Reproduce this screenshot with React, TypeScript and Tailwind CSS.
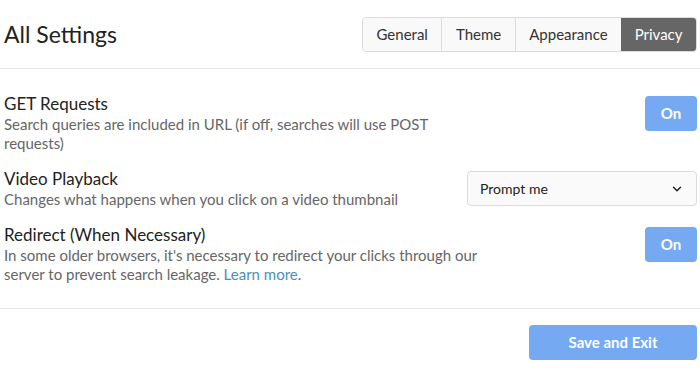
import { ChevronDown } from "lucide-react";

function Toggle() {
  return (
    <button className="mt-[3px] w-[52px] h-[35px] rounded-[4px] bg-[#75a9f1] text-white text-[15px] font-bold shrink-0">
      On
    </button>
  );
}

export default function App() {
  const tabs = ["General", "Theme", "Appearance", "Privacy"];
  return (
    <div className="w-[700px] h-[381px] bg-white text-[#222] font-['Lato','Liberation_Sans',sans-serif]">
      <div className="flex items-center justify-between pl-1 pr-[3px] pt-[17px] pb-4 border-b border-[#e6e6e6]">
        <h1 className="text-[23px] leading-none">All Settings</h1>
        <div className="flex h-[35px] rounded-[4px] border border-[#dcdcdc] overflow-hidden text-[15px]">
          {tabs.map((t, i) => (
            <div
              key={t}
              className={
                t === "Privacy"
                  ? "flex items-center px-[13.5px] bg-[#666] text-white"
                  : "flex items-center px-[13.5px] bg-[#f9f9f9] text-[#333] " + (i > 0 ? "border-l border-[#dcdcdc]" : "")
              }
            >
              {t}
            </div>
          ))}
        </div>
      </div>

      <div className="flex flex-col gap-[15px] pl-1 pr-[3px] pt-[24px] pb-[24px] border-b border-[#e6e6e6]">
        <div className="flex items-start justify-between">
          <div className="w-[470px]">
            <div className="text-[17px] leading-[22px]">GET Requests</div>
            <div className="text-[15px] leading-[19px] text-[#666]">
              Search queries are included in URL (if off, searches will use POST requests)
            </div>
          </div>
          <Toggle />
        </div>
        <div className="flex items-center justify-between">
          <div>
            <div className="text-[17px] leading-[22px]">Video Playback</div>
            <div className="text-[15px] leading-[19px] text-[#666]">
              Changes what happens when you click on a video thumbnail
            </div>
          </div>
          <div className="w-[230px] h-[35px] flex items-center justify-between rounded-[4px] border border-[#dcdcdc] bg-[#fafafa] pl-3 pr-3 text-[14px] text-[#222]">
            <span>Prompt me</span>
            <ChevronDown size={14} strokeWidth={2.5} />
          </div>
        </div>
        <div className="flex items-start justify-between">
          <div className="w-[492px]">
            <div className="text-[17px] leading-[22px]">Redirect (When Necessary)</div>
            <div className="text-[15px] leading-[19px] text-[#666]">
              In some older browsers, it's necessary to redirect your clicks through our
              <br />
              server to prevent search leakage. <a className="text-[#4a8fba]">Learn more</a>
              <span>.</span>
            </div>
          </div>
          <Toggle />
        </div>
      </div>

      <div className="flex justify-end pr-[3px] pt-4">
        <button className="w-[168px] h-[35px] rounded-[4px] bg-[#75a9f1] text-white text-[15px] font-bold">
          Save and Exit
        </button>
      </div>
    </div>
  );
}
